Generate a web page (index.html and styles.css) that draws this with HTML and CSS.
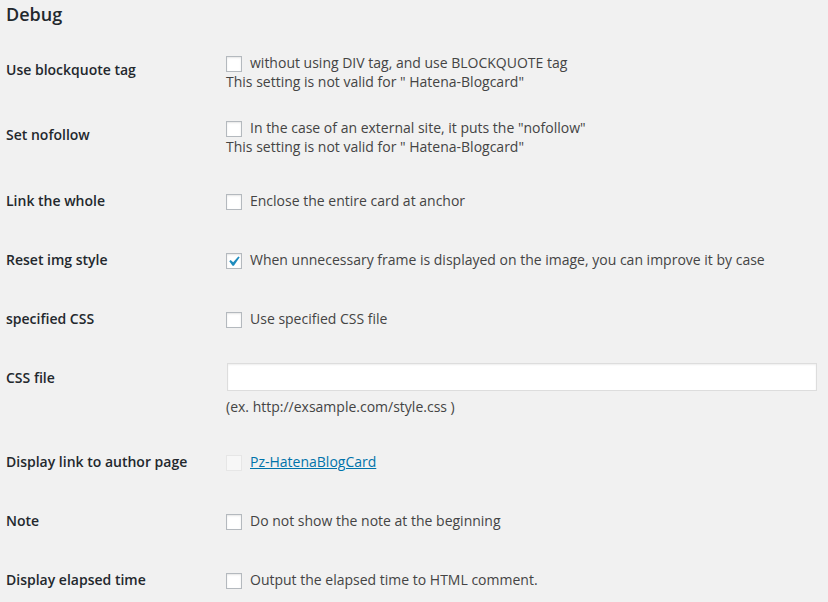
FILE: index.html
```html
<!DOCTYPE html>
<html>
<head>
<meta charset="utf-8">
<link rel="stylesheet" href="styles.css">
</head>
<body>
<div class="wrap">
  <h2 class="title">Debug</h2>
  <div class="form-table">
    <div class="row row-a">
      <div class="th">Use blockquote tag</div>
      <div class="td">
        <label class="opt"><span class="cb"></span>without using DIV tag, and use BLOCKQUOTE tag</label>
        <div class="line">This setting is not valid for " Hatena-Blogcard"</div>
      </div>
    </div>
    <div class="row row-b">
      <div class="th">Set nofollow</div>
      <div class="td">
        <label class="opt"><span class="cb"></span>In the case of an external site, it puts the "nofollow"</label>
        <div class="line">This setting is not valid for " Hatena-Blogcard"</div>
      </div>
    </div>
    <div class="row">
      <div class="th">Link the whole</div>
      <div class="td"><label class="opt"><span class="cb"></span>Enclose the entire card at anchor</label></div>
    </div>
    <div class="row">
      <div class="th">Reset img style</div>
      <div class="td"><label class="opt"><span class="cb checked"><svg viewBox="3.5 2.5 14 14" width="14" height="14"><path d="M14.83 4.89l1.34.94-5.81 8.38H9.02L5.78 9.67l1.34-1.25 2.57 2.4z" fill="#1e8cbe"/></svg></span>When unnecessary frame is displayed on the image, you can improve it by case</label></div>
    </div>
    <div class="row">
      <div class="th">specified CSS</div>
      <div class="td"><label class="opt"><span class="cb"></span>Use specified CSS file</label></div>
    </div>
    <div class="row row-input">
      <div class="th">CSS file</div>
      <div class="td">
        <input class="text" type="text" value="">
        <div class="line hint">(ex. http://exsample.com/style.css )</div>
      </div>
    </div>
    <div class="row">
      <div class="th">Display link to author page</div>
      <div class="td"><label class="opt"><span class="cb disabled"></span><a href="#" class="link">Pz-HatenaBlogCard</a></label></div>
    </div>
    <div class="row">
      <div class="th">Note</div>
      <div class="td"><label class="opt"><span class="cb"></span>Do not show the note at the beginning</label></div>
    </div>
    <div class="row">
      <div class="th">Display elapsed time</div>
      <div class="td"><label class="opt"><span class="cb"></span>Output the elapsed time to HTML comment.</label></div>
    </div>
  </div>
</div>
</body>
</html>
```
FILE: styles.css
```css
html, body {
  margin: 0;
  padding: 0;
  background: #f1f1f1;
}
body {
  font-family: "Open Sans", "Noto Sans", sans-serif;
  font-size: 14px;
  color: #444;
}
.wrap {
  padding: 3px 0 0 6px;
}
.title {
  margin: 0 0 15px;
  font-size: 18px;
  line-height: 22px;
  font-weight: 600;
  color: #23282d;
}
.row {
  display: grid;
  grid-template-columns: 220px 1fr;
  align-items: start;
}
.th {
  padding: 20px 0;
  line-height: 19px;
  font-weight: 600;
  color: #23282d;
}
.td {
  padding: 20px 0;
  line-height: 19px;
}
.row-a .td {
  padding: 13px 0 14px;
}
.row-b .td {
  padding: 13px 0 15px;
}
.row-input .td {
  padding: 15px 0 16px;
}
.opt {
  display: flex;
  align-items: center;
  height: 19px;
  white-space: nowrap;
}
.line {
  white-space: nowrap;
}
.cb {
  box-sizing: border-box;
  flex: none;
  width: 16px;
  height: 16px;
  margin: 3px 8px 0 0;
  border: 1px solid #b4b9be;
  background: #fff;
  box-shadow: inset 0 1px 2px rgba(0, 0, 0, 0.1);
  display: flex;
  align-items: center;
  justify-content: center;
}
.cb svg {
  display: block;
}
.cb.disabled {
  border-color: #e6e6e6;
  background: #f7f7f7;
  box-shadow: none;
}
.link {
  color: #0073aa;
  text-decoration: underline;
}
.text {
  display: block;
  box-sizing: border-box;
  width: 590px;
  height: 28px;
  margin: 0 0 0 1px;
  padding: 3px 5px;
  border: 1px solid #ddd;
  background: #fff;
  box-shadow: inset 0 1px 2px rgba(0, 0, 0, 0.07);
  font: inherit;
  outline: none;
}
.hint {
  margin-top: 6px;
}
```
